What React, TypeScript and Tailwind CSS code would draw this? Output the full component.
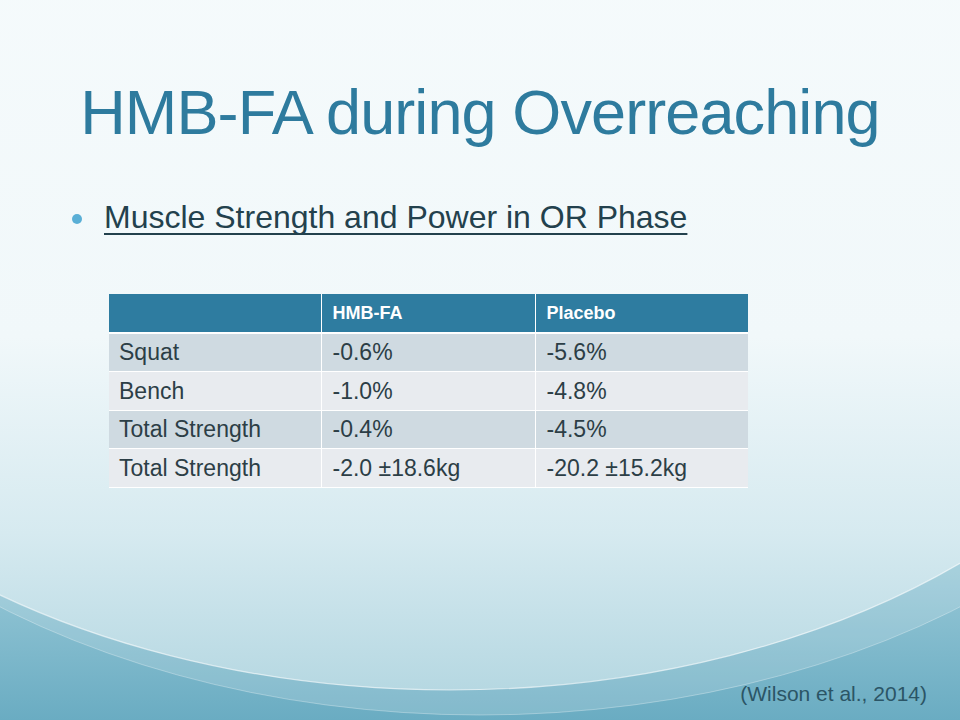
import React from 'react';

const ROWS: [string, string, string][] = [
  ['Squat', '-0.6%', '-5.6%'],
  ['Bench', '-1.0%', '-4.8%'],
  ['Total Strength', '-0.4%', '-4.5%'],
  ['Total Strength', '-2.0 ±18.6kg', '-20.2 ±15.2kg'],
];

function Backdrop() {
  return (
    <svg className="absolute inset-0" width="960" height="720" viewBox="0 0 960 720">
      <defs>
        <linearGradient id="sea" x1="0" y1="0" x2="0" y2="1">
          <stop offset="0.7" stopColor="#a9d3df" />
          <stop offset="1" stopColor="#6aacc2" />
        </linearGradient>
        <linearGradient id="sky" x1="0" y1="0" x2="0" y2="1">
          <stop offset="0" stopColor="#f8fcfd" />
          <stop offset="0.64" stopColor="#f1f8fa" />
          <stop offset="0.84" stopColor="#d6eaf0" />
          <stop offset="1" stopColor="#b6d8e2" />
        </linearGradient>
      </defs>
      <rect x="0" y="0" width="960" height="720" fill="url(#sea)" />
      <ellipse cx="480" cy="190" rx="790" ry="525" fill="#ffffff" opacity="0.16" />
      <ellipse cx="450" cy="200" rx="760" ry="490" fill="url(#sky)" />
      <ellipse cx="450" cy="200" rx="760" ry="490" fill="none" stroke="#ffffff" strokeOpacity="0.6" strokeWidth="1.2" />
      <ellipse cx="480" cy="190" rx="790" ry="525" fill="none" stroke="#ffffff" strokeOpacity="0.3" strokeWidth="1" />
    </svg>
  );
}

export default function App() {
  return (
    <div className="relative h-[720px] w-[960px] overflow-hidden font-['Liberation_Sans',Arial,sans-serif]">
      <Backdrop />
      <div className="relative flex flex-col">
        <h1 className="mt-[81px] text-center text-[63px] font-normal leading-[63px] tracking-[-0.9px] text-[#2e7b9e]">
          HMB-FA during Overreaching
        </h1>
        <div className="mt-[55px] flex h-[36px] items-center pl-[72px]">
          <span className="mt-[4px] h-[10px] w-[10px] rounded-full bg-[#5aafd6]" />
          <span className="ml-[22px] text-[32px] leading-[36px] text-[#23414d] underline decoration-[2px] underline-offset-[5px] [text-decoration-skip-ink:none]">
            Muscle Strength and Power in OR Phase
          </span>
        </div>
        <table className="ml-[109px] mt-[59px] w-[639px] border-collapse text-[23px] text-[#2c3e46]">
          <thead>
            <tr className="h-[39px] bg-[#2e7ca0] text-[18px] font-bold text-white">
              <th className="w-[212px] border-b-2 border-white" />
              <th className="w-[214px] border-b-2 border-l border-white pl-[11px] text-left">HMB-FA</th>
              <th className="border-b-2 border-l border-white pl-[11px] text-left">Placebo</th>
            </tr>
          </thead>
          <tbody>
            {ROWS.map((r, i) => (
              <tr key={i} className={`h-[38.5px] ${i % 2 === 0 ? 'bg-[#cfdae1]' : 'bg-[#e8ebef]'}`}>
                <td className="border-b border-white pl-[10px]">{r[0]}</td>
                <td className="border-b border-l border-white pl-[11px]">{r[1]}</td>
                <td className="border-b border-l border-white pl-[11px]">{r[2]}</td>
              </tr>
            ))}
          </tbody>
        </table>
      </div>
      <div className="absolute bottom-[11px] right-[33px] text-[21px] text-[#2b5566]">(Wilson et al., 2014)</div>
    </div>
  );
}
